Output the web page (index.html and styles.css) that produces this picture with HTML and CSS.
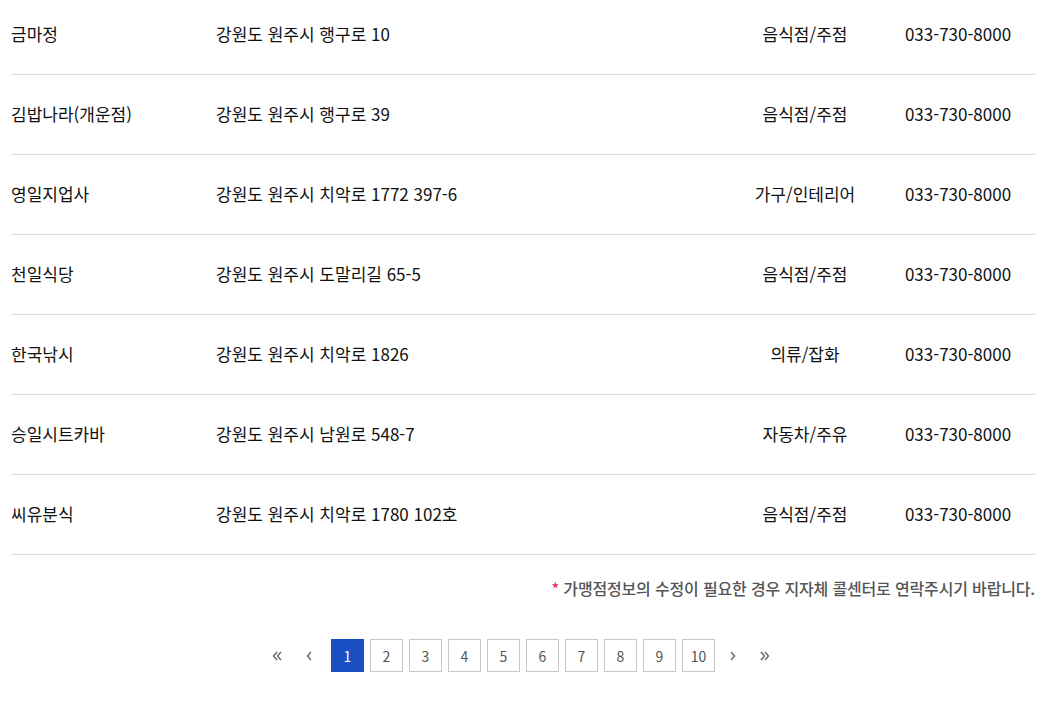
FILE: index.html
```html
<!DOCTYPE html>
<html lang="ko">
<head>
<meta charset="utf-8">
<link rel="stylesheet" href="styles.css">
</head>
<body>
<div class="wrap">
  <div class="list">
    <div class="row"><div class="c-name">금마정</div><div class="c-addr">강원도 원주시 행구로 10</div><div class="c-cat">음식점/주점</div><div class="c-tel">033-730-8000</div></div>
    <div class="row"><div class="c-name">김밥나라(개운점)</div><div class="c-addr">강원도 원주시 행구로 39</div><div class="c-cat">음식점/주점</div><div class="c-tel">033-730-8000</div></div>
    <div class="row"><div class="c-name">영일지업사</div><div class="c-addr">강원도 원주시 치악로 1772 397-6</div><div class="c-cat">가구/인테리어</div><div class="c-tel">033-730-8000</div></div>
    <div class="row"><div class="c-name">천일식당</div><div class="c-addr">강원도 원주시 도말리길 65-5</div><div class="c-cat">음식점/주점</div><div class="c-tel">033-730-8000</div></div>
    <div class="row"><div class="c-name">한국낚시</div><div class="c-addr">강원도 원주시 치악로 1826</div><div class="c-cat">의류/잡화</div><div class="c-tel">033-730-8000</div></div>
    <div class="row"><div class="c-name">승일시트카바</div><div class="c-addr">강원도 원주시 남원로 548-7</div><div class="c-cat">자동차/주유</div><div class="c-tel">033-730-8000</div></div>
    <div class="row"><div class="c-name">씨유분식</div><div class="c-addr">강원도 원주시 치악로 1780 102호</div><div class="c-cat">음식점/주점</div><div class="c-tel">033-730-8000</div></div>
  </div>
  <p class="notice"><span class="star">*</span> 가맹점정보의 수정이 필요한 경우 지자체 콜센터로 연락주시기 바랍니다.</p>
  <nav class="pager">
    <a class="arrow" href="#">
      <svg width="12" height="12" viewBox="0 0 12 12"><path d="M6 2 L2.5 6 L6 10 M10 2 L6.5 6 L10 10" fill="none" stroke="#666" stroke-width="1.4"/></svg>
    </a>
    <a class="arrow" href="#">
      <svg width="12" height="12" viewBox="0 0 12 12"><path d="M8 2 L4.5 6 L8 10" fill="none" stroke="#666" stroke-width="1.4"/></svg>
    </a>
    <div class="pages">
      <a class="pg on" href="#">1</a>
      <a class="pg" href="#">2</a>
      <a class="pg" href="#">3</a>
      <a class="pg" href="#">4</a>
      <a class="pg" href="#">5</a>
      <a class="pg" href="#">6</a>
      <a class="pg" href="#">7</a>
      <a class="pg" href="#">8</a>
      <a class="pg" href="#">9</a>
      <a class="pg" href="#">10</a>
    </div>
    <a class="arrow" href="#">
      <svg width="12" height="12" viewBox="0 0 12 12"><path d="M4 2 L7.5 6 L4 10" fill="none" stroke="#666" stroke-width="1.4"/></svg>
    </a>
    <a class="arrow" href="#">
      <svg width="12" height="12" viewBox="0 0 12 12"><path d="M2 2 L5.5 6 L2 10 M6 2 L9.5 6 L6 10" fill="none" stroke="#666" stroke-width="1.4"/></svg>
    </a>
  </nav>
</div>
</body>
</html>
```

FILE: styles.css
```css
html, body {
  margin: 0;
  padding: 0;
  background: #fff;
}
body {
  font-family: "Noto Sans CJK KR", "Noto Sans", sans-serif;
  color: #111;
  overflow: hidden;
}
.wrap {
  width: 1024px;
  margin: -5px 0 0 11px;
}
.row {
  box-sizing: border-box;
  display: flex;
  align-items: center;
  height: 80px;
  padding-bottom: 2px;
  border-bottom: 1px solid #dcdcdc;
  font-size: 17px;
}
.c-name {
  width: 205px;
}
.c-addr {
  width: 513px;
}
.c-cat {
  width: 152px;
  text-align: center;
}
.c-tel {
  width: 154px;
  text-align: center;
}
.notice {
  margin: 22px 0 0;
  text-align: right;
  font-size: 16px;
  font-weight: 500;
  letter-spacing: -0.16px;
  color: #555;
  line-height: 22px;
}
.star {
  color: #e6336b;
}
.pager {
  display: flex;
  justify-content: center;
  align-items: center;
  margin-top: 40px;
  padding-right: 4px;
}
.arrow {
  display: flex;
  align-items: center;
  justify-content: center;
  width: 32px;
  height: 33px;
}
.pages {
  display: flex;
  gap: 6px;
  margin: 0 2px 0 6px;
}
.pg {
  box-sizing: border-box;
  width: 33px;
  height: 33px;
  border: 1px solid #c8c8c8;
  display: flex;
  align-items: center;
  justify-content: center;
  font-size: 14px;
  color: #555;
  text-decoration: none;
}
.pg.on {
  background: #1a4fc4;
  border-color: #1a4fc4;
  color: #fff;
}
```
